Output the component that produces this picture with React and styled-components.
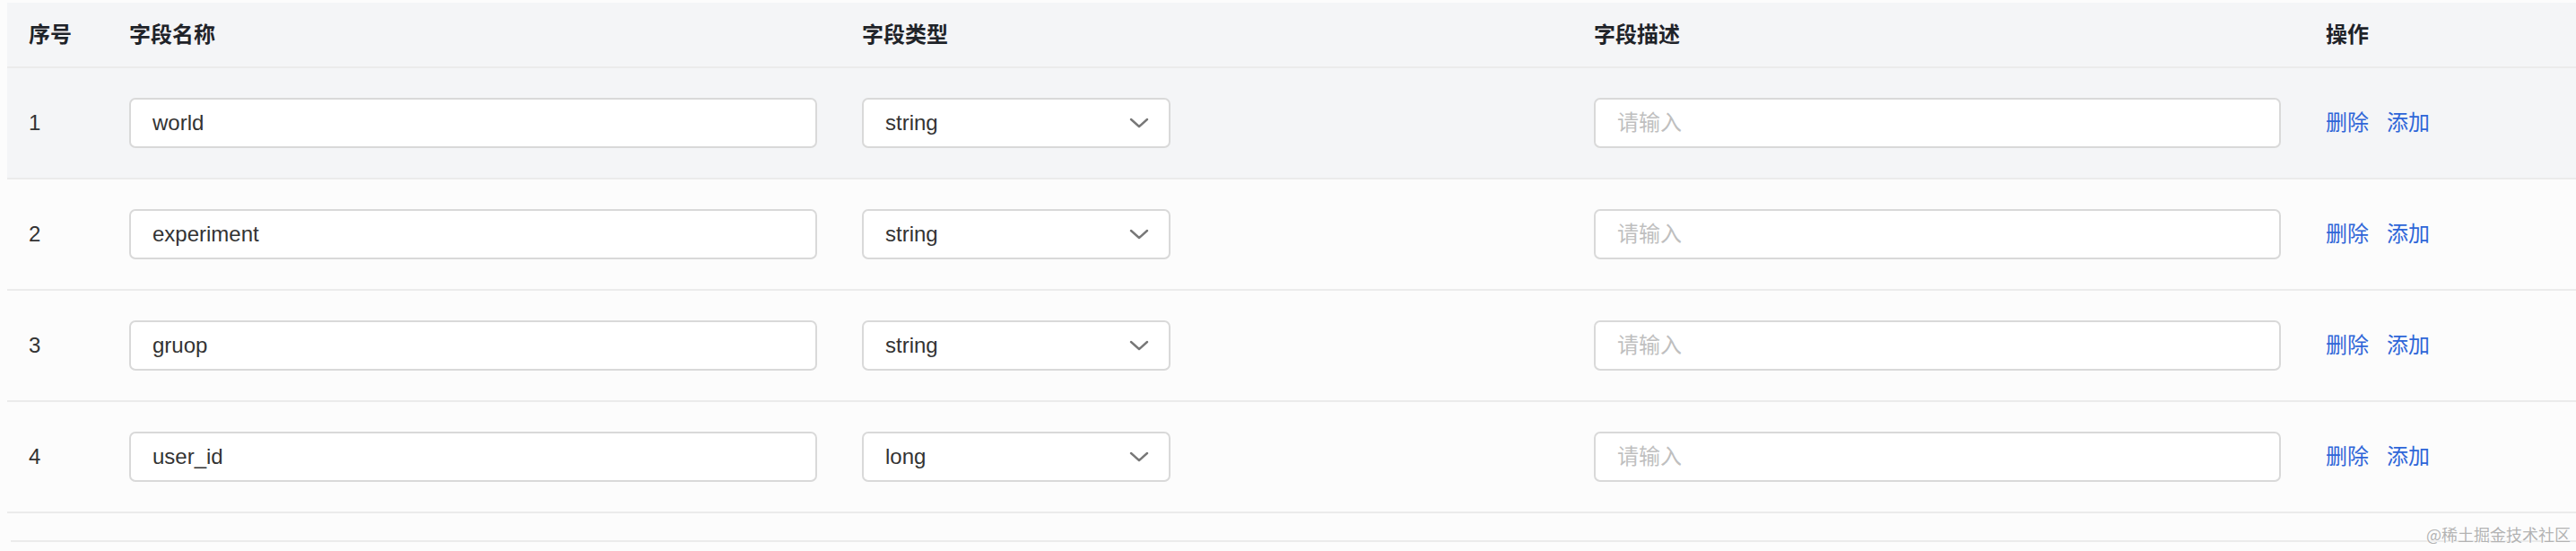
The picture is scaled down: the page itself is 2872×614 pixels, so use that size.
import React from 'react'
import styled, { createGlobalStyle } from 'styled-components'

const GlobalStyle = createGlobalStyle`
  html, body {
    margin: 0;
    padding: 0;
    background: #fcfcfc;
  }
  body {
    font-family: "Liberation Sans", Arial, "Noto Sans CJK SC", sans-serif;
    color: #333;
  }
`

const Page = styled.div`
  position: relative;
  height: 614px;
  padding: 3px 0 0 8px;
  box-sizing: border-box;
  overflow: hidden;
`

const Table = styled.div`
  width: 2864px;
`

const Row = styled.div`
  display: grid;
  grid-template-columns: 112px 817px 816px 816px 1fr;
  align-items: center;
  height: ${({ header }) => (header ? '73px' : '124px')};
  background: ${({ header, active }) => (header || active ? '#f4f5f7' : '#fcfcfc')};
  border-bottom: 2px solid #ebebeb;
  box-sizing: border-box;
`

const Cell = styled.div`
  padding-left: 24px;
  font-size: 24px;
  line-height: 1;
  color: #333;
`

const HeadCell = styled(Cell)`
  font-weight: 700;
  color: #1f2329;
`

const Input = styled.div`
  width: ${({ width }) => width}px;
  height: 56px;
  box-sizing: border-box;
  border: 2px solid #d9d9d9;
  border-radius: 7px;
  background: #fff;
  display: flex;
  align-items: center;
  justify-content: space-between;
  padding: 0 22px 0 24px;
  font-size: 24px;
  color: ${({ placeholder }) => (placeholder ? '#bfbfbf' : '#333')};
`

const Chevron = styled.svg`
  width: 22px;
  height: 12px;
  display: block;
`

const Actions = styled.div`
  display: flex;
  gap: 20px;
`

const ActionLink = styled.a`
  color: #2f66d8;
  font-size: 24px;
  cursor: pointer;
`

const Spacer = styled.div`
  height: 30px;
  margin-left: 4px;
  border-bottom: 2px solid #ebebeb;
`

const Watermark = styled.div`
  position: absolute;
  right: 6px;
  bottom: 6px;
  font-size: 18px;
  color: #b3b3b3;
  text-shadow: 0 0 2px #fff, 0 0 2px #fff;
  font-family: "Noto Sans CJK SC", sans-serif;
`

const fields = [
  { name: 'world', type: 'string' },
  { name: 'experiment', type: 'string' },
  { name: 'gruop', type: 'string' },
  { name: 'user_id', type: 'long' }
]

const App = () => {
  return (
    <Page>
      <GlobalStyle />
      <Table>
        <Row header>
          <HeadCell>序号</HeadCell>
          <HeadCell>字段名称</HeadCell>
          <HeadCell>字段类型</HeadCell>
          <HeadCell>字段描述</HeadCell>
          <HeadCell>操作</HeadCell>
        </Row>
        {fields.map((f, i) => (
          <Row key={f.name} active={i === 0}>
            <Cell>{i + 1}</Cell>
            <Cell>
              <Input width={767}>{f.name}</Input>
            </Cell>
            <Cell>
              <Input width={344}>
                {f.type}
                <Chevron viewBox="0 0 22 12">
                  <polyline points="2,2 11,10 20,2" fill="none" stroke="#777" strokeWidth="2.4" strokeLinecap="round" strokeLinejoin="round" />
                </Chevron>
              </Input>
            </Cell>
            <Cell>
              <Input width={766} placeholder>请输入</Input>
            </Cell>
            <Cell>
              <Actions>
                <ActionLink>删除</ActionLink>
                <ActionLink>添加</ActionLink>
              </Actions>
            </Cell>
          </Row>
        ))}
        <Spacer />
      </Table>
      <Watermark>@稀土掘金技术社区</Watermark>
    </Page>
  )
}

export default App
